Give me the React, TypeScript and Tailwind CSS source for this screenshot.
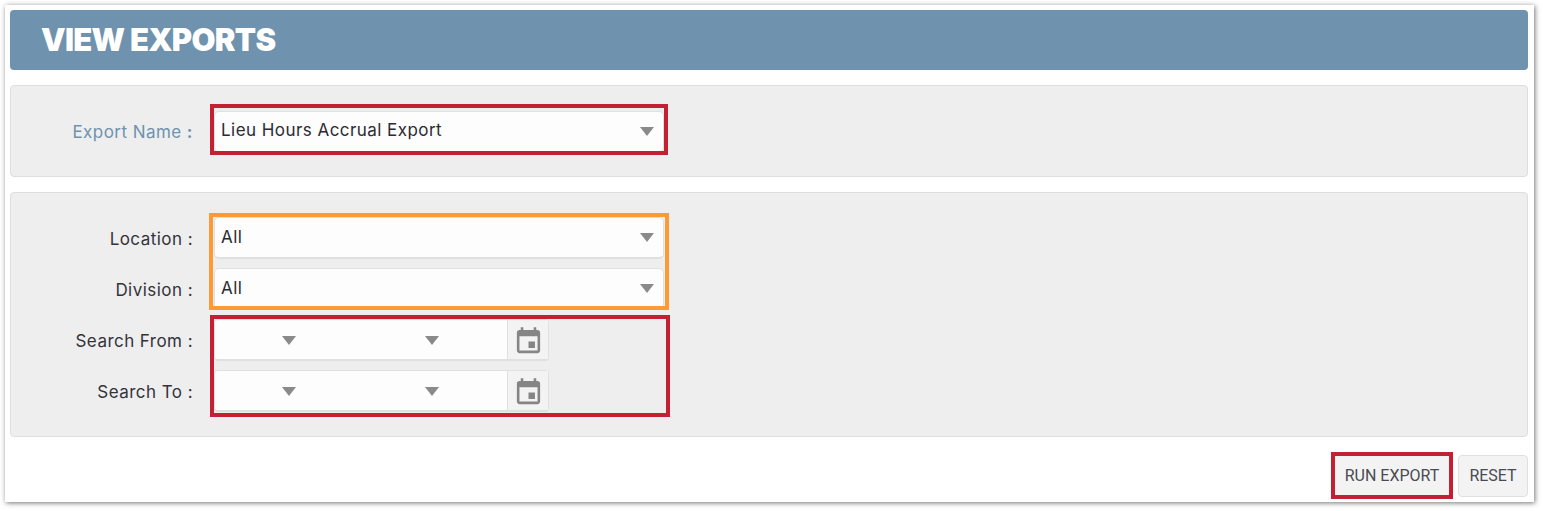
function Arrow({ className = "" }: { className?: string }) {
  return (
    <svg width="14" height="9" viewBox="0 0 14 9" className={`shrink-0 ${className}`}>
      <path d="M0 0h14L7 9z" fill="#8a8a8a" />
    </svg>
  );
}

function CalendarIcon() {
  return (
    <svg width="31" height="31" viewBox="0 0 24 24" fill="#858585" className="mt-[3px]">
      <path d="M17 12h-5v5h5v-5zM16 1v2H8V1H6v2H5c-1.11 0-1.99.9-1.99 2L3 19c0 1.1.89 2 2 2h14c1.1 0 2-.9 2-2V5c0-1.1-.9-2-2-2h-1V1h-2zm3 18H5V8h14v11z" />
    </svg>
  );
}

function Select({ value }: { value: string }) {
  return (
    <div className="flex h-[42px] w-[450px] items-center justify-between rounded-[5px] border border-b-2 border-[#e0e0e0] bg-[#fdfdfd] pl-[6px] pr-[9px]">
      <span className="text-[17px] tracking-[0.45px] text-[#2b2b33]">{value}</span>
      <Arrow />
    </div>
  );
}

function DatePicker() {
  return (
    <div className="flex h-[42px] w-[335px] rounded-[4px] border border-b-2 border-[#e0e0e0] bg-[#fdfdfd]">
      <div className="flex w-[143px] items-center justify-end pr-[62px]">
        <Arrow className="mt-[1px]" />
      </div>
      <div className="flex w-[143px] items-center justify-end pr-[62px]">
        <Arrow className="mt-[1px]" />
      </div>
      <div className="ml-[6px] flex flex-1 items-center justify-center border-l border-[#e0e0e0] bg-[#f3f3f3]">
        <CalendarIcon />
      </div>
    </div>
  );
}

function Row({ label, children }: { label: string; children: React.ReactNode }) {
  return (
    <div className="flex h-[42px] items-center">
      <label className="mt-[4px] w-[183px] pr-[1px] text-right text-[17px] tracking-[0.45px] text-[#33333b]">{label} :</label>
      <div className="ml-[20px]">{children}</div>
    </div>
  );
}

function Highlight({ className }: { className: string }) {
  return <div className={`pointer-events-none absolute border-4 ${className}`} />;
}

export default function App() {
  return (
    <div className="relative h-[511px] w-[1543px] overflow-hidden bg-white font-['Inter',sans-serif]">
      <div className="ml-[5px] mt-[5px] flex h-[497px] w-[1529px] flex-col bg-white p-[5px] pr-[6px] shadow-[1px_1px_5px_rgba(0,0,0,0.55)]">
        <div className="flex h-[60px] items-center rounded-[4px] bg-[#6f92ae] pl-[31px]">
          <h1 className="mt-[1px] text-[31px] font-black tracking-[-0.7px] text-white">VIEW EXPORTS</h1>
        </div>

        <div className="mt-[15px] h-[92px] rounded-[4px] border border-[#dedede] bg-[#eeeeee] pt-[25px]">
          <div className="flex h-[44px] items-center">
            <label className="w-[183px] pr-[1px] text-right text-[17px] tracking-[0.45px] text-[#6f92ae]">
              Export Name <span className="font-bold">:</span>
            </label>
            <div className="ml-[20px] mt-[-3px]">
              <Select value="Lieu Hours Accrual Export" />
            </div>
          </div>
        </div>

        <div className="mt-[15px] flex h-[245px] flex-col gap-[9px] rounded-[4px] border border-[#dedede] bg-[#eeeeee] pt-[24px]">
          <Row label="Location">
            <Select value="All" />
          </Row>
          <Row label="Division">
            <Select value="All" />
          </Row>
          <Row label="Search From">
            <DatePicker />
          </Row>
          <Row label="Search To">
            <DatePicker />
          </Row>
        </div>

        <div className="mt-[18px] flex justify-end gap-[5px] font-['Roboto',sans-serif] text-[16px] text-[#4a4a52]">
          <button className="h-[42px] w-[122px] bg-[#f3f3f3]">RUN EXPORT</button>
          <button className="h-[42px] w-[70px] rounded-[4px] border border-[#e0e0e0] bg-[#f3f3f3]">RESET</button>
        </div>
      </div>

      <Highlight className="left-[210px] top-[104px] h-[51px] w-[458px] border-[#c42033]" />
      <Highlight className="left-[209px] top-[213px] h-[97px] w-[460px] border-[#fd9a35]" />
      <Highlight className="left-[210px] top-[315px] h-[102px] w-[460px] border-[#c42033]" />
      <Highlight className="left-[1331px] top-[452px] h-[47px] w-[122px] border-[#c42033]" />
    </div>
  );
}
